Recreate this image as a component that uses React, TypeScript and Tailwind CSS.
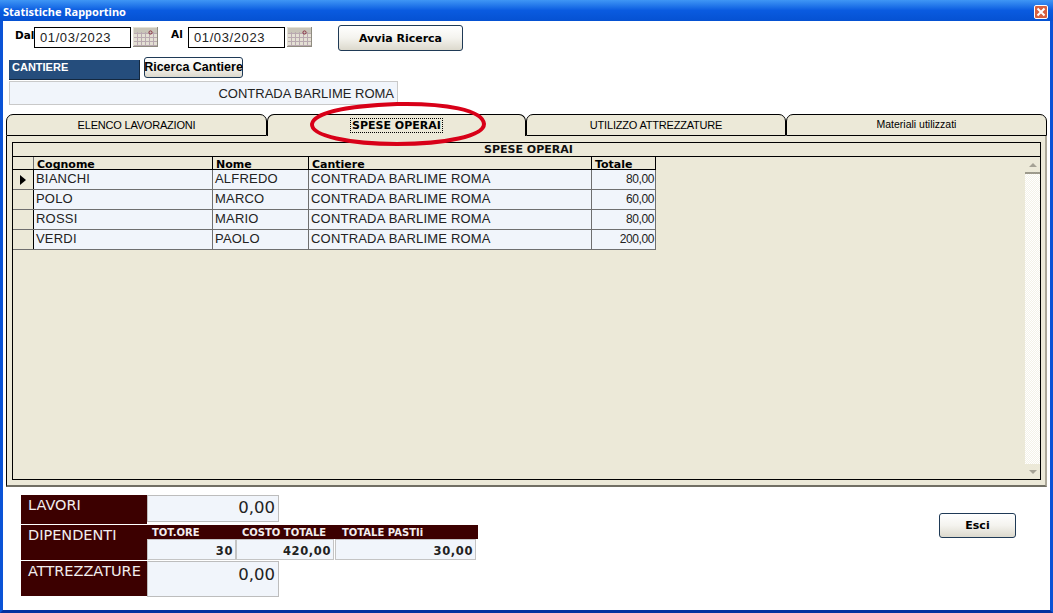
import React from "react";

const ui = "font-['Liberation_Sans',Arial,sans-serif]";
const dj = "font-['DejaVu_Sans',Verdana,sans-serif]";
const noto = "font-['Noto_Sans',Arial,sans-serif]";

function Calendar() {
  return (
    <svg width="25" height="20" viewBox="0 0 25 20" className="shrink-0">
      <rect x="0" y="0" width="25" height="20" fill="#e4e0d4" />
      <rect x="1" y="1" width="23" height="5" fill="#c8c4b8" />
      <g stroke="#b9a9b0" strokeWidth="1">
        <path d="M1 6.5H24M1 10.5H24M1 14.5H24M1 18.5H24" />
        <path d="M4.5 5V19M8.5 5V19M12.5 5V19M16.5 5V19M20.5 5V19" />
      </g>
      <circle cx="17.5" cy="5.5" r="1.6" fill="none" stroke="#8a3040" strokeWidth="1" />
      <path d="M0 19.5H25M24.5 0V20" stroke="#8f8c80" />
    </svg>
  );
}

function XpButton({ className, children }: { className: string; children: React.ReactNode }) {
  return (
    <div className={`flex items-center justify-center whitespace-nowrap rounded-[3px] border border-[#1f3a56] bg-gradient-to-b from-white via-[#f4f3ee] to-[#dcd9cd] text-black font-bold ${className}`}>
      {children}
    </div>
  );
}

const rows = [
  ["BIANCHI", "ALFREDO", "CONTRADA BARLIME ROMA", "80,00"],
  ["POLO", "MARCO", "CONTRADA BARLIME ROMA", "60,00"],
  ["ROSSI", "MARIO", "CONTRADA BARLIME ROMA", "80,00"],
  ["VERDI", "PAOLO", "CONTRADA BARLIME ROMA", "200,00"],
];

function Tab({ label, w, active, small }: { label: string; w: string; active?: boolean; small?: boolean }) {
  return (
    <div
      className={`${w} h-[22px] flex items-center justify-center rounded-t-[7px] border-t border-l border-r border-black bg-[#ece9d8] text-black ${active ? "border-b-0 font-bold text-[11px] " + dj : "border-b border-b-black " + ui} ${small ? "text-[10.5px]" : active ? "" : "text-[11px] tracking-[-0.2px]"}`}
    >
      {active ? <span className="border border-dotted border-black leading-[13px] px-px">{label}</span> : label}
    </div>
  );
}

function Scrollbar() {
  return (
    <div className="w-[15px] flex flex-col bg-[repeating-conic-gradient(#f4f2e8_0_25%,#ffffff_0_50%)] bg-[length:2px_2px]">
      <div className="h-[17px] bg-[#ece9d8] border-b-2 border-[#9d9a8c] flex items-center justify-center">
        <div className="w-0 h-0 border-l-[4px] border-r-[4px] border-b-[4px] border-l-transparent border-r-transparent border-b-[#a5a295]" />
      </div>
      <div className="flex-1" />
      <div className="h-[15px] bg-[#ece9d8] flex items-center justify-center">
        <div className="w-0 h-0 border-l-[4px] border-r-[4px] border-t-[4px] border-l-transparent border-r-transparent border-t-[#a5a295]" />
      </div>
    </div>
  );
}

const Cell = ({ w, children, right }: { w: string; children: React.ReactNode; right?: boolean }) => (
  <div className={`${w} h-full shrink-0 border-r border-[#6f6f6f] flex items-start pl-[2px] pr-px leading-[18px] text-[#222] ${right ? "justify-end text-[12px] tracking-[-0.4px]" : "text-[13px] tracking-[0.2px]"}`}>
    {children}
  </div>
);

export default function App() {
  return (
    <div className={`relative w-[1053px] h-[613px] bg-white flex flex-col overflow-hidden ${ui}`}>
      {/* title bar */}
      <div className="h-[21px] shrink-0 bg-gradient-to-b from-[#3f96f5] via-[#0a5be0] to-[#0551d2] flex items-center pl-[3px] pr-[5px] justify-between">
        <span className={`text-white font-bold text-[11px] pt-[3px] ${noto}`}>Statistiche Rapportino</span>
        <div className="w-[14px] h-[14px] mt-[2px] rounded-[2px] border border-white bg-[#d8603f] flex items-center justify-center">
          <svg width="10" height="10" viewBox="0 0 10 10">
            <path d="M1.5 1.5L8.5 8.5M8.5 1.5L1.5 8.5" stroke="white" strokeWidth="2" />
          </svg>
        </div>
      </div>

      <div className="flex-1 flex flex-col border-x-[3px] border-b-[3px] border-x-[#0a53d6] border-b-[#04309f] min-h-0">
        {/* dates row */}
        <div className="h-[30px] flex items-start mt-[4px] ml-[12px] text-black">
          <span className={`w-[19px] mt-[3px] text-[10.5px] font-bold ${dj}`}>Dal</span>
          <div className="w-[97px] h-[21px] mt-[2px] border border-black text-[13px] pl-[5px] leading-[19px] tracking-[0.6px] text-[#222]">01/03/2023</div>
          <div className="ml-[2px] mt-[2px]"><Calendar /></div>
          <span className={`ml-[13px] w-[17px] mt-[2px] text-[10.5px] font-bold ${dj}`}>Al</span>
          <div className="w-[97px] h-[21px] mt-[2px] border border-black text-[13px] pl-[5px] leading-[19px] tracking-[0.6px] text-[#222]">01/03/2023</div>
          <div className="ml-[2px] mt-[2px]"><Calendar /></div>
          <XpButton className={`ml-[26px] w-[125px] h-[26px] text-[11px] pt-[2px] ${dj}`}>Avvia Ricerca</XpButton>
        </div>

        {/* cantiere */}
        <div className="flex items-start ml-[6px] mt-[2px] h-[24px]">
          <div className={`w-[131px] h-[20px] mt-[3px] bg-[#254d7c] border-b border-r border-[#14283f] text-white font-bold text-[11px] pl-[3px] leading-[15px] ${ui}`}>CANTIERE</div>
          <XpButton className={`ml-[4px] w-[99px] h-[21px] text-[12.5px] ${ui}`}>Ricerca Cantiere</XpButton>
        </div>
        <div className="ml-[6px] w-[389px] h-[24px] bg-[#f1f5fb] border border-[#c9c9c9] text-right pr-[3px] text-[13px] leading-[23px] text-[#222]">
          CONTRADA BARLIME ROMA
        </div>

        {/* tabs */}
        <div className="flex ml-[3px] mt-[9px] w-[1041px]">
          <Tab label="ELENCO LAVORAZIONI" w="w-[261px]" />
          <Tab label="SPESE OPERAI" w="w-[259px]" active />
          <Tab label="UTILIZZO ATTREZZATURE" w="w-[260px]" />
          <Tab label="Materiali utilizzati" w="w-[261px]" small />
        </div>

        {/* tab page */}
        <div className="ml-[3px] w-[1041px] h-[351px] bg-[#ece9d8] border-l border-l-black border-r-2 border-r-[#aca899] border-b-2 border-b-[#716f64] pl-[5px] pr-[4px] pt-[6px] pb-[5px]">
          <div className="w-full h-full border border-black flex flex-col">
            <div className={`h-[14px] shrink-0 border-b border-black text-center font-bold text-[11px] leading-[14px] pl-[4px] text-[#111] ${dj}`}>SPESE OPERAI</div>
            <div className="flex-1 flex min-h-0">
              <div className="flex-1 flex flex-col">
                <div className="flex h-[13px] w-[643px] border-b border-black font-bold text-[11px] leading-[15px] text-black overflow-hidden">
                  <div className="w-[21px] shrink-0 border-r border-[#6f6f6f]" />
                  {[["Cognome", "w-[179px]"], ["Nome", "w-[96px]"], ["Cantiere", "w-[283px]"], ["Totale", "w-[64px]"]].map(([t, w]) => (
                    <div key={t} className={`${w} shrink-0 border-r border-black pl-[3px] ${dj}`}>{t}</div>
                  ))}
                </div>
                {rows.map((r, i) => (
                  <div key={r[0]} className="flex h-[20px] w-[643px] border-b border-[#6f6f6f] bg-[#f1f5fb]">
                    <div className="w-[21px] shrink-0 h-full bg-[#ece9d8] border-r border-black flex items-center justify-center">
                      {i === 0 && <div className="w-0 h-0 border-t-[5px] border-b-[5px] border-l-[6px] border-t-transparent border-b-transparent border-l-black" />}
                    </div>
                    <Cell w="w-[179px]">{r[0]}</Cell>
                    <Cell w="w-[96px]">{r[1]}</Cell>
                    <Cell w="w-[283px]">{r[2]}</Cell>
                    <Cell w="w-[64px]" right>{r[3]}</Cell>
                  </div>
                ))}
              </div>
              <Scrollbar />
            </div>
          </div>
        </div>

        {/* totals + exit */}
        <div className="flex-1 flex items-start ml-[18px] mt-[8px]">
          <div className="w-[457px] flex flex-col">
            <div className="flex h-[30px]">
              <div className={`w-[126px] h-[29px] bg-[#3c0000] text-[#f2eeee] text-[14.5px] pl-[7px] leading-[21px] ${dj}`}>LAVORI</div>
              <div className={`w-[132px] h-[27px] bg-[#f1f5fb] border border-[#bdbdbd] text-right pr-[3px] text-[16.5px] leading-[24px] text-[#222] ${dj}`}>0,00</div>
            </div>
            <div className="flex h-[36px]">
              <div className={`w-[126px] h-[35px] bg-[#3c0000] text-[#f2eeee] text-[14.5px] pl-[7px] leading-[21px] ${dj}`}>DIPENDENTI</div>
              <div className="w-[331px] flex flex-col">
                <div className={`h-[14px] bg-[#3c0000] text-[#f2eeee] font-bold text-[10px] leading-[15px] flex ${dj}`}>
                  <span className="w-[95px] pl-[5px]">TOT.ORE</span>
                  <span className="w-[100px]">COSTO TOTALE</span>
                  <span>TOTALE PASTIi</span>
                </div>
                <div className={`flex h-[21px] text-[#222] font-bold text-[11.5px] leading-[22px] tracking-[0.6px] text-right ${dj}`}>
                  <div className="w-[89px] bg-[#f1f5fb] border border-[#c4c4c4] pr-[2px]">30</div>
                  <div className="w-[98px] bg-[#f1f5fb] border border-[#c4c4c4] pr-[2px]">420,00</div>
                  <div className="ml-px w-[141px] bg-[#f1f5fb] border border-[#c4c4c4] pr-[2px]">30,00</div>
                </div>
              </div>
            </div>
            <div className="flex h-[36px]">
              <div className={`w-[126px] h-[35px] bg-[#3c0000] text-[#f2eeee] text-[14.5px] pl-[7px] leading-[21px] whitespace-nowrap ${dj}`}>ATTREZZATURE</div>
              <div className={`w-[132px] h-[36px] bg-[#f1f5fb] border border-[#bdbdbd] text-right pr-[3px] text-[16.5px] leading-[25px] text-[#222] ${dj}`}>0,00</div>
            </div>
          </div>
          <XpButton className={`ml-[461px] mt-[18px] w-[77px] h-[25px] text-[11px] pt-px ${dj}`}>Esci</XpButton>
        </div>
      </div>

      {/* hand-drawn red ellipse over the tab */}
      <svg className="absolute left-[305px] top-[98px] pointer-events-none" width="186" height="54" viewBox="0 0 186 54">
        <path d="M7 26C9 15 40 8 92 6C140 5 178 12 179 26C179 38 140 46 92 46C45 46 6 38 7 26Z" fill="none" stroke="#d80018" strokeWidth="4" />
      </svg>
    </div>
  );
}
